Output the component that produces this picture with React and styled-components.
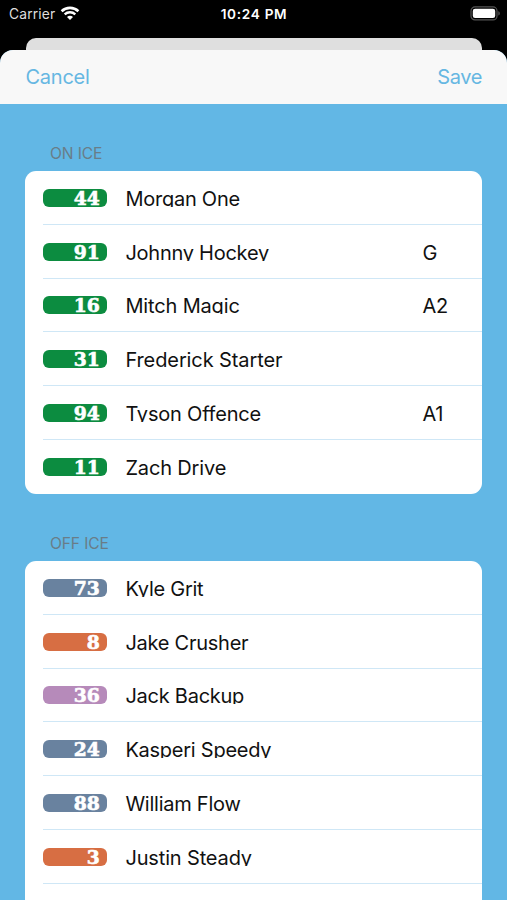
import React from 'react';
import styled, { createGlobalStyle } from 'styled-components';

const GlobalStyle = createGlobalStyle`
  * {
    box-sizing: border-box;
  }
  body {
    margin: 0;
    background: #000;
    font-family: Inter, "Liberation Sans", sans-serif;
  }
`;

const Screen = styled.div`
  display: flex;
  flex-direction: column;
  width: 507px;
  height: 900px;
  overflow: hidden;
  background: #000;
`;

const StatusBar = styled.div`
  display: grid;
  grid-template-columns: 1fr auto 1fr;
  align-items: center;
  height: 38px;
  padding: 0 7px 11px 9px;
  color: #fff;
`;

const Carrier = styled.div`
  display: flex;
  align-items: center;
  gap: 5px;
  font-size: 13.8px;
  letter-spacing: 0.15px;
  color: #dedede;
`;

const Clock = styled.div`
  margin-left: -1px;
  font-size: 13.6px;
  font-weight: 600;
  letter-spacing: 0.7px;
`;

const Battery = styled.svg`
  justify-self: end;
`;

const BackCard = styled.div`
  flex: none;
  height: 12px;
  margin: 0 25px 0 26px;
  border-radius: 10px 10px 0 0;
  background: #dfdfdf;
`;

const Sheet = styled.div`
  flex: 1;
  min-height: 0;
  overflow: hidden;
  border-radius: 13px 13px 0 0;
  background: #62b7e5;
`;

const NavBar = styled.div`
  display: flex;
  justify-content: space-between;
  align-items: center;
  height: 53.5px;
  padding: 0 25px 0 25.5px;
  background: #f8f8f8;
`;

const NavButton = styled.button`
  padding: 0;
  border: 0;
  background: none;
  font-family: inherit;
  font-size: 20px;
  line-height: 24px;
  letter-spacing: ${props => props.$spacing}px;
  color: #66b7e2;
`;

const List = styled.div`
  padding: 0 24.6px 0 25.4px;
`;

const Section = styled.section`
  padding-top: 39.5px;
`;

const SectionTitle = styled.h2`
  height: 28px;
  margin: 0;
  padding-left: 24.5px;
  font-size: 15.6px;
  font-weight: 400;
  line-height: 22px;
  letter-spacing: -0.1px;
  color: #697d88;
`;

const Card = styled.div`
  border-radius: 11px;
  overflow: hidden;
  background: #fff;
`;

const Row = styled.div`
  display: flex;
  align-items: center;
  height: 53.75px;
  margin-left: 18px;
  padding-top: 1px;
  border-bottom: 1px solid #cfe7f6;

  &:last-child {
    border-bottom-color: transparent;
  }
`;

const Jersey = styled.div`
  flex: none;
  width: 63.5px;
  height: 18px;
  padding-right: 7px;
  border-radius: 6px;
  overflow: hidden;
  background: ${props => props.$color};
  color: #fff;
  font-family: "DejaVu Serif", serif;
  font-size: 18.8px;
  font-weight: 700;
  line-height: 19px;
  text-align: right;
  -webkit-text-stroke: 0.6px #fff;
`;

// descenders are cut off by the 18px tall label
const Name = styled.div`
  width: 297px;
  height: 18px;
  margin-left: 18.5px;
  overflow: hidden;
  font-size: 20px;
  line-height: 20px;
  letter-spacing: ${props => props.$spacing || -0.25}px;
  white-space: nowrap;
  color: #111;
`;

const Position = styled.div`
  height: 18px;
  font-size: 20px;
  line-height: 20px;
  letter-spacing: -0.3px;
  color: #111;
`;

const green = '#0c8c40';
const slate = '#69829f';
const orange = '#d76e43';
const purple = '#b68aba';

const onIce = [
  { number: 44, name: 'Morgan One', color: green },
  { number: 91, name: 'Johnny Hockey', color: green, position: 'G' },
  { number: 16, name: 'Mitch Magic', color: green, position: 'A2', spacing: -0.15 },
  { number: 31, name: 'Frederick Starter', color: green, spacing: -0.1 },
  { number: 94, name: 'Tyson Offence', color: green, position: 'A1', spacing: -0.2 },
  { number: 11, name: 'Zach Drive', color: green, spacing: -0.15 },
];

const offIce = [
  { number: 73, name: 'Kyle Grit', color: slate },
  { number: 8, name: 'Jake Crusher', color: orange },
  { number: 36, name: 'Jack Backup', color: purple },
  { number: 24, name: 'Kasperi Speedy', color: slate },
  { number: 88, name: 'William Flow', color: slate },
  { number: 3, name: 'Justin Steady', color: orange, spacing: -0.15 },
];

const Wifi = () => (
  <svg width="20" height="15" viewBox="0 0 20 15" fill="none">
    <path d="M1.6 5.2C6.3 .8 13.7 .8 18.4 5.2" stroke="#fff" strokeWidth="2.6" />
    <path d="M4.7 8.4C7.7 5.6 12.3 5.6 15.3 8.4" stroke="#fff" strokeWidth="2.4" />
    <path d="M7 11C8.7 9.4 11.3 9.4 13 11L10 14Z" fill="#fff" />
  </svg>
);

const Players = ({ title, players, children }) => (
  <Section>
    <SectionTitle>{title}</SectionTitle>
    <Card>
      {players.map(p => (
        <Row key={p.number}>
          <Jersey $color={p.color}>{p.number}</Jersey>
          <Name $spacing={p.spacing}>{p.name}</Name>
          {p.position && <Position>{p.position}</Position>}
        </Row>
      ))}
      {children}
    </Card>
  </Section>
);

const App = () => (
  <Screen>
    <GlobalStyle />
    <StatusBar>
      <Carrier>
        Carrier
        <Wifi />
      </Carrier>
      <Clock>10:24 PM</Clock>
      <Battery width="30" height="15" viewBox="0 0 30 15">
        <rect x="1" y="0.9" width="26" height="13" rx="4" fill="none" stroke="#555" strokeWidth="1.2" />
        <rect x="2.8" y="2.7" width="22.4" height="9.4" rx="2.3" fill="#fff" />
        <path d="M28.3 5.2c2 .6 2 3.8 0 4.4z" fill="#555" />
      </Battery>
    </StatusBar>
    <BackCard />
    <Sheet>
      <NavBar>
        <NavButton $spacing={-0.25}>Cancel</NavButton>
        <NavButton $spacing={-0.4}>Save</NavButton>
      </NavBar>
      <List>
        <Players title="ON ICE" players={onIce} />
        <Players title="OFF ICE" players={offIce}>
          <Row />
        </Players>
      </List>
    </Sheet>
  </Screen>
);

export default App;
